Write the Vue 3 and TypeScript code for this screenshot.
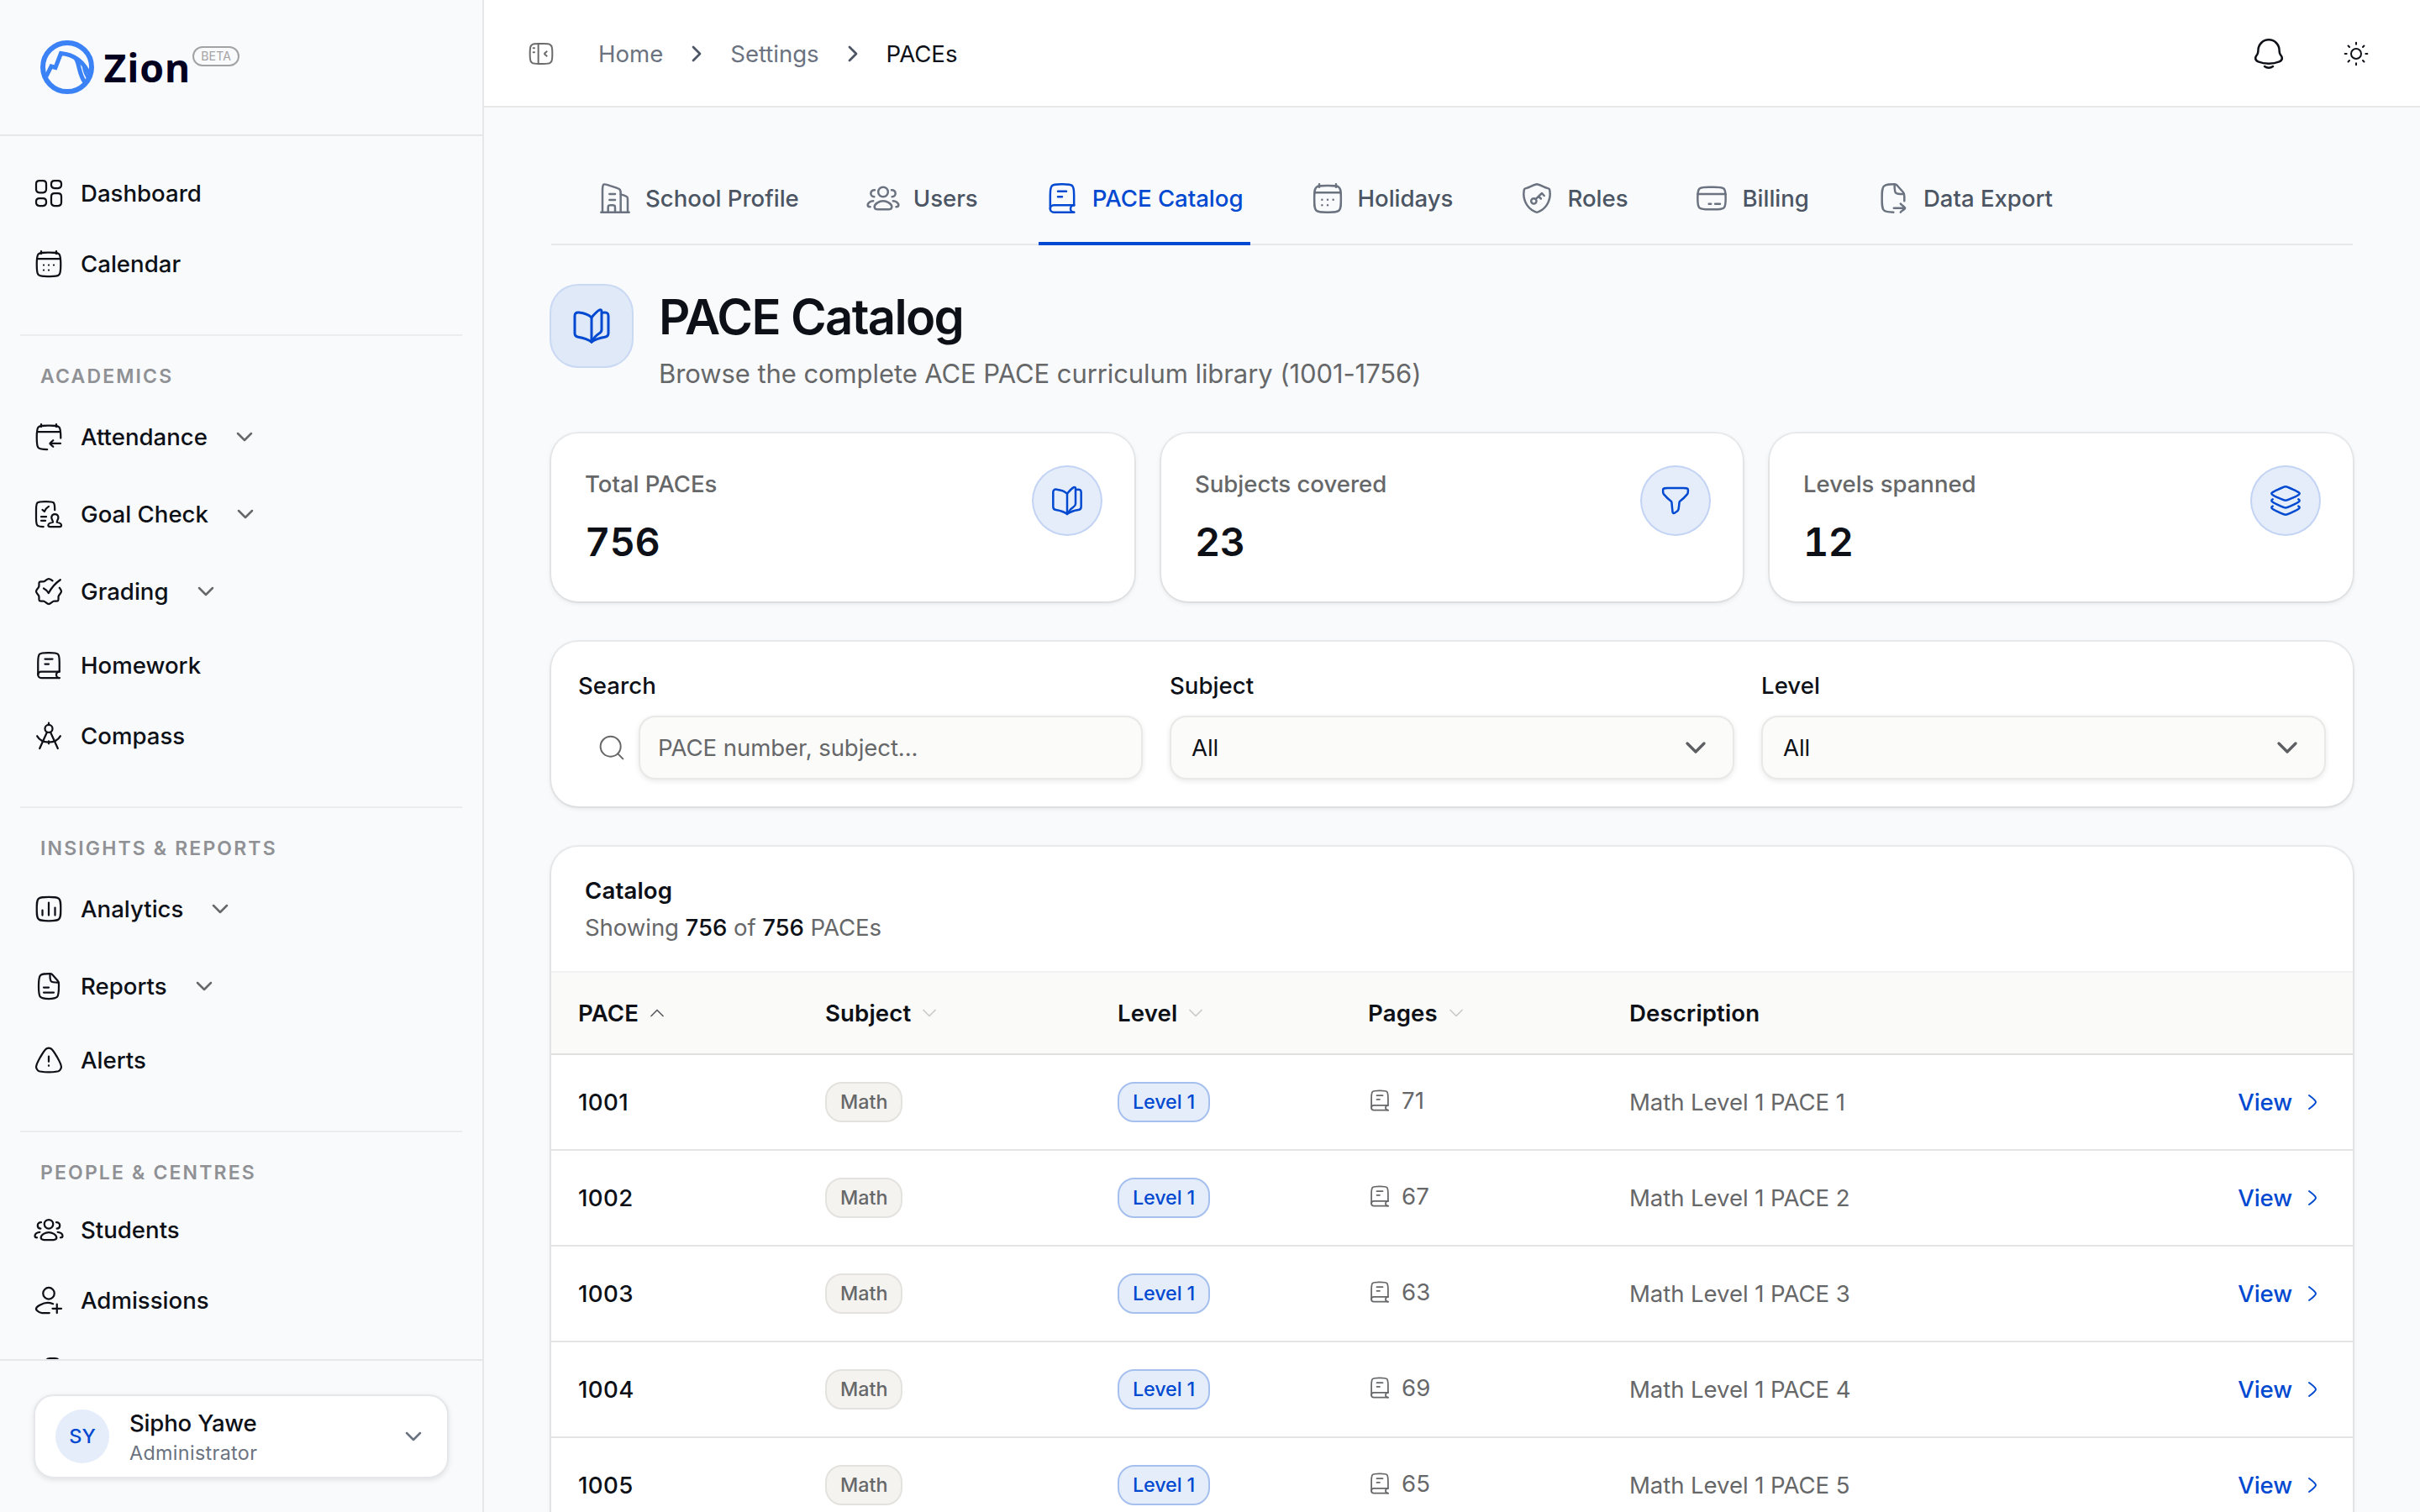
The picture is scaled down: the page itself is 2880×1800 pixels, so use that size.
<script setup lang="ts">
import { h } from 'vue'

interface IconProps {
  name: string
  size: number
  weight?: number
}

interface NavItem {
  label: string
  icon: string
  expandable?: boolean
}

interface NavSection {
  title?: string
  items: NavItem[]
}

const CARD_SQUARE =
  'M2.5 12C2.5 7.52 2.5 5.28 3.89 3.89C5.28 2.5 7.52 2.5 12 2.5C16.48 2.5 18.72 2.5 20.11 3.89C21.5 5.28 21.5 7.52 21.5 12C21.5 16.48 21.5 18.72 20.11 20.11C18.72 21.5 16.48 21.5 12 21.5C7.52 21.5 5.28 21.5 3.89 20.11C2.5 18.72 2.5 16.48 2.5 12Z'

// All icons are drawn on a 24 unit grid.
const icons: Record<string, string[]> = {
  dashboard: [
    'M2 4.6C2 2.7 2.7 2 4.6 2H7.4C9.3 2 10 2.7 10 4.6V8.9C10 10.8 9.3 11.5 7.4 11.5H4.6C2.7 11.5 2 10.8 2 8.9Z',
    'M14 4.6C14 2.7 14.7 2 16.6 2H19.4C21.3 2 22 2.7 22 4.6V5.4C22 7.3 21.3 8 19.4 8H16.6C14.7 8 14 7.3 14 5.4Z',
    'M14 14.6C14 12.7 14.7 12 16.6 12H19.4C21.3 12 22 12.7 22 14.6V19.4C22 21.3 21.3 22 19.4 22H16.6C14.7 22 14 21.3 14 19.4Z',
    'M2 18.6C2 16.7 2.7 16 4.6 16H7.4C9.3 16 10 16.7 10 18.6V19.4C10 21.3 9.3 22 7.4 22H4.6C2.7 22 2 21.3 2 19.4Z',
  ],
  calendar: [
    'M18 2V4M6 2V4',
    'M11.995 13H12.005M11.995 17H12.005M15.991 13H16M8 13H8.009M8 17H8.009',
    'M2.5 12.24C2.5 7.89 2.5 5.71 3.75 4.35C5 3 7.02 3 11.05 3H12.95C16.98 3 19 3 20.25 4.35C21.5 5.71 21.5 7.89 21.5 12.24V12.76C21.5 17.11 21.5 19.29 20.25 20.65C19 22 16.98 22 12.95 22H11.05C7.02 22 5 22 3.75 20.65C2.5 19.29 2.5 17.11 2.5 12.76Z',
    'M3 8H21',
  ],
  attendance: [
    'M18 2V4M6 2V4',
    'M21.5 13V12.24C21.5 7.89 21.5 5.71 20.25 4.35C19 3 16.98 3 12.95 3H11.05C7.02 3 5 3 3.75 4.35C2.5 5.71 2.5 7.89 2.5 12.24V12.76C2.5 17.11 2.5 19.29 3.75 20.65C4.9 21.88 6.9 22 10.8 22',
    'M3 8H21',
    'M21.3 17.3H13M13 17.3C13 16.6 14.99 15.3 15.5 14.8M13 17.3C13 18 14.99 19.3 15.5 19.8',
  ],
  goal: [
    'M16.8 8.8C16.8 5.4 16.8 3.8 15.8 2.9C14.8 2 13.2 2 10 2H8.8C5.6 2 4 2 3 3C2 4 2 5.6 2 8.8V15.2C2 18.4 2 20 3 21C3.9 21.9 5.2 22 7.8 22',
    'M7 8.6L8.6 10C9.2 8.3 10.3 6.9 12 5.9',
    'M6 14.1H10M6 17.2H9.4',
    'M15.3 18.5C15.6 17.3 14.2 16.4 14.2 14.7C14.2 13.1 15.4 12 16.9 12C18.4 12 19.6 13.1 19.6 14.7C19.6 16.4 18.2 17.3 18.5 18.5C20.4 18.8 22 19.2 22 20.8C22 21.7 21.7 22 20.8 22H13C12 22 11.6 21.7 11.6 20.8C11.6 19.2 13.4 18.8 15.3 18.5Z',
  ],
  grading: [
    'M15 3.6C14.2 2.8 13.2 2 12 2C10.6 2 9.6 3.7 8.2 4.2C7 4.6 5.3 3.9 4.6 4.6C3.9 5.3 4.6 7 4.2 8.2C3.7 9.6 2 10.6 2 12C2 13.4 3.7 14.4 4.2 15.8C4.6 17 3.9 18.7 4.6 19.4C5.3 20.1 7 19.4 8.2 19.8C9.6 20.3 10.6 22 12 22C13.4 22 14.4 20.3 15.8 19.8C17 19.4 18.7 20.1 19.4 19.4C20.1 18.7 19.4 17 19.8 15.8C20.3 14.4 22 13.4 22 12C22 10.9 21.2 10.1 20.5 9.2',
    'M8 9.6C9.6 10.4 11 11.8 11.9 13.4C14.2 8.9 17.4 5.4 21.2 2.8',
  ],
  book: [
    'M20.5 16.93V10C20.5 6.23 20.5 4.34 19.33 3.17C18.16 2 16.27 2 12.5 2H11.5C7.73 2 5.84 2 4.67 3.17C3.5 4.34 3.5 6.23 3.5 10V19.5',
    'M20.5 17H6C4.62 17 3.5 18.12 3.5 19.5C3.5 20.88 4.62 22 6 22H20.5',
    'M20.5 22C19.12 22 18 20.88 18 19.5C18 18.12 19.12 17 20.5 17',
    'M15 7H9M12 11H9',
  ],
  compass: [
    'M12 3.4V1.8',
    'M15 6.3A3 3 0 1 1 9 6.3A3 3 0 1 1 15 6.3Z',
    'M10.6 9.2L4.8 22M13.4 9.2L19.2 22',
    'M2.8 12.2C4.6 15.2 8 17 12 17C16 17 19.4 15.2 21.2 12.2M12 16.2V18.2',
  ],
  analytics: [CARD_SQUARE, 'M7 17V13M12 17V7M17 17V11'],
  report: [
    'M4 12C4 7.29 4 4.93 5.32 3.46C6.64 2 8.75 2 13 2C13.8 2 14.1 2.1 14.7 2.7L19 7.5C20 8.6 20 9 20 10.5V12C20 16.71 20 19.07 18.68 20.54C17.36 22 15.2 22 12 22C8.8 22 6.64 22 5.32 20.54C4 19.07 4 16.71 4 12Z',
    'M13 2.2V3C13 5.83 13 7.24 13.88 8.12C14.76 9 16.2 9 19 9H19.8',
    'M8 13H12M8 17H16',
  ],
  alert: [
    'M5.32 9.68C7.74 5.41 8.94 3.28 10.6 2.73C11.51 2.42 12.49 2.42 13.4 2.73C15.06 3.28 16.26 5.41 18.68 9.68C21.09 13.95 22.3 16.09 21.94 17.83C21.74 18.79 21.25 19.65 20.54 20.31C19.24 21.5 16.83 21.5 12 21.5C7.17 21.5 4.76 21.5 3.46 20.31C2.75 19.65 2.26 18.79 2.06 17.83C1.7 16.09 2.91 13.95 5.32 9.68Z',
    'M12 9V13.2M12 16.3V16.5',
  ],
  users: [
    'M15.5 7.5A3.5 3.5 0 1 1 8.5 7.5A3.5 3.5 0 1 1 15.5 7.5Z',
    'M12 14C9.4 14 5.8 15.9 5.8 18.2C5.8 19.5 7 20 8.3 20H15.7C17 20 18.2 19.5 18.2 18.2C18.2 15.9 14.6 14 12 14Z',
    'M6 6.1C4.4 6 3.2 7 3.2 8.6C3.2 10 4.2 11 5.6 11M18 6.1C19.6 6 20.8 7 20.8 8.6C20.8 10 19.8 11 18.4 11',
    'M4.9 13.9C2.9 13.9 1 15.3 1 16.8C1 17.7 1.7 18.2 2.7 18.2M19.1 13.9C21.1 13.9 23 15.3 23 16.8C23 17.7 22.3 18.2 21.3 18.2',
  ],
  userAdd: [
    'M16.5 6.5A4.5 4.5 0 1 1 7.5 6.5A4.5 4.5 0 1 1 16.5 6.5Z',
    'M12.5 22H6.59C5.04 22 3.81 21.25 2.7 20.19C.44 18.03 4.15 16.3 5.57 15.46C8.6 13.65 12.3 13.52 15.4 14.8',
    'M18.5 15V22M15 18.5H22',
  ],
  building: [
    'M2 22H22',
    'M3 22V6.72C3 4.06 3 2.73 3.85 2.2C4.7 1.67 5.95 2.15 8.45 3.1L13 4.6C14.6 5.2 15.3 5.5 15.6 6.1C16 6.7 16 7.5 16 9V22',
    'M16 9.2L18.5 10C19.8 10.5 20.4 10.7 20.7 11.2C21 11.6 21 12.2 21 13.4V22',
    'M8 9H12M8 13.2H12',
    'M12 22V19C12 18.06 12 17.59 11.71 17.29C11.41 17 10.94 17 10 17H9C8.06 17 7.59 17 7.29 17.29C7 17.59 7 18.06 7 19V22',
  ],
  shield: [
    'M12 2C9 2.6 7.04 4.02 4.73 4.75C3.8 5.05 3.33 5.2 3.14 5.41C2.95 5.63 2.89 5.93 2.78 6.55C1.9 12.5 4.4 18.6 10.2 21.4C10.9 21.8 11.4 22 12 22C12.6 22 13.1 21.8 13.8 21.4C19.6 18.6 22.1 12.5 21.22 6.55C21.11 5.93 21.05 5.63 20.86 5.41C20.67 5.2 20.2 5.05 19.27 4.75C16.96 4.02 15 2.6 12 2Z',
    'M11.7 14A1.9 1.9 0 1 1 7.9 14A1.9 1.9 0 1 1 11.7 14Z',
    'M11.1 12.7L15.6 8.4L17.2 10.2M13.3 10.7L14.9 12.3',
  ],
  card: [
    'M2 12C2 8.46 2 6.69 3.05 5.49C3.22 5.3 3.4 5.12 3.6 4.96C4.87 4 6.75 4 10.5 4H13.5C17.25 4 19.13 4 20.4 4.96C20.6 5.12 20.78 5.3 20.95 5.49C22 6.69 22 8.46 22 12C22 15.54 22 17.31 20.95 18.51C20.78 18.7 20.6 18.88 20.4 19.04C19.13 20 17.25 20 13.5 20H10.5C6.75 20 4.87 20 3.6 19.04C3.4 18.88 3.22 18.7 3.05 18.51C2 17.31 2 15.54 2 12Z',
    'M2 9H22M10 16H11.5M14.5 16H18',
  ],
  fileExport: [
    'M12.2 22C8.4 21.9 6.4 21.7 5.32 20.54C4 19.07 4 16.71 4 12C4 7.29 4 4.93 5.32 3.46C6.64 2 8.75 2 13 2C13.8 2 14.1 2.1 14.7 2.7L19 7.5C20 8.6 20 9 20 10.5V14',
    'M13 2.2V3C13 5.83 13 7.24 13.88 8.12C14.76 9 16.2 9 19 9H19.8',
    'M12.5 19H20.3M17.3 16C17.8 16.8 20.5 18.2 20.5 19C20.5 19.8 17.8 21.2 17.3 22',
  ],
  panel: [
    'M2 12C2 8.31 2 6.47 2.81 5.16C3.11 4.68 3.49 4.25 3.92 3.92C5.08 3 6.72 3 10 3H14C17.28 3 18.92 3 20.08 3.92C20.51 4.25 20.89 4.68 21.19 5.16C22 6.47 22 8.31 22 12C22 15.69 22 17.53 21.19 18.84C20.89 19.32 20.51 19.75 20.08 20.08C18.92 21 17.28 21 14 21H10C6.72 21 5.08 21 3.92 20.08C3.49 19.75 3.11 19.32 2.81 18.84C2 17.53 2 15.69 2 12Z',
    'M9.5 3V21M5 7H6M5 10.7H6',
    'M17 10L15.77 11.06C15.26 11.5 15 11.72 15 12C15 12.28 15.26 12.5 15.77 12.94L17 14',
  ],
  bell: [
    'M2.53 14.77C2.32 16.16 3.27 17.13 4.43 17.61C8.89 19.46 15.11 19.46 19.57 17.61C20.73 17.13 21.68 16.16 21.47 14.77C21.34 13.91 20.69 13.2 20.21 12.5C19.59 11.58 19.53 10.57 19.53 9.5C19.53 5.36 16.16 2 12 2C7.84 2 4.48 5.36 4.48 9.5C4.47 10.57 4.41 11.58 3.79 12.5C3.31 13.2 2.66 13.91 2.53 14.77Z',
    'M9 21C9.8 21.62 10.85 22 12 22C13.15 22 14.2 21.62 15 21',
  ],
  sun: [
    'M16.5 12A4.5 4.5 0 1 1 7.5 12A4.5 4.5 0 1 1 16.5 12Z',
    'M12 2V3.5M12 20.5V22M19.07 19.07L18.01 18.01M5.99 5.99L4.93 4.93M22 12H20.5M3.5 12H2M19.07 4.93L18.01 5.99M5.99 18.01L4.93 19.07',
  ],
  openBook: [
    'M12 21.5V7C10.5 5.5 8 4.4 4.5 4C2.7 3.8 2 4.6 2 6V16.3C2 17.9 2.6 18.4 4 18.6C7.5 19.2 10 20 12 21.5Z',
    'M12 7C13.3 5.5 14.7 3.6 16.7 2.5C17.6 2.1 18 2.6 18 3.5V14.3C18 15.5 17.5 15.9 16.5 16.5C14.7 17.6 13.2 19.3 12 21.5',
    'M18.2 4.2C21 3.6 22 4.3 22 6V16.3C22 17.9 21.4 18.4 20 18.6C16.5 19.2 14 20 12 21.5',
  ],
  filter: [
    'M8.86 12.51C6.37 10.65 4.6 8.6 3.63 7.45C3.33 7.09 3.23 6.83 3.17 6.37C2.97 4.8 2.87 4.01 3.33 3.51C3.79 3 4.6 3 6.23 3H17.77C19.4 3 20.21 3 20.67 3.51C21.13 4.01 21.03 4.8 20.83 6.37C20.77 6.83 20.67 7.09 20.37 7.45C19.4 8.6 17.63 10.65 15.13 12.51C14.91 12.68 14.76 12.96 14.73 13.26C14.48 15.99 14.26 17.49 14.11 18.24C13.89 19.47 12.15 20.2 11.23 20.86C10.67 21.25 10 20.78 9.93 20.18C9.8 19.03 9.54 16.69 9.26 13.26C9.23 12.95 9.08 12.68 8.86 12.51Z',
  ],
  layers: [
    'M8.64 3.15C10.27 2.38 11.09 2 12 2C12.91 2 13.73 2.38 15.36 3.15L18.55 4.64C20.85 5.72 22 6.06 22 6.93C22 7.79 20.85 8.33 18.55 9.41L15.36 10.7C13.73 11.47 12.91 11.85 12 11.85C11.09 11.85 10.27 11.47 8.64 10.7L5.45 9.41C3.15 8.33 2 7.79 2 6.93C2 6.06 3.15 5.72 5.45 4.64Z',
    'M21.2 11C21.7 11.3 22 11.6 22 12C22 12.86 20.85 13.4 18.55 14.48L15.36 15.97C13.73 16.73 12.91 17.1 12 17.1C11.09 17.1 10.27 16.73 8.64 15.97L5.45 14.48C3.15 13.4 2 12.86 2 12C2 11.6 2.3 11.3 2.8 11',
    'M21.2 16C21.7 16.3 22 16.6 22 17C22 17.86 20.85 18.4 18.55 19.48L15.36 20.97C13.73 21.73 12.91 22.1 12 22.1C11.09 22.1 10.27 21.73 8.64 20.97L5.45 19.48C3.15 18.4 2 17.86 2 17C2 16.6 2.3 16.3 2.8 16',
  ],
  search: ['M17.5 17.5L22 22', 'M20 11A9 9 0 1 1 2 11A9 9 0 1 1 20 11Z'],
  chevronDown: ['M18 9L12 15L6 9'],
  chevronUp: ['M18 15L12 9L6 15'],
  chevronRight: ['M9 6L15 12L9 18'],
  arrowRight: ['M9 6C9 6 15 10.4 15 12C15 13.6 9 18 9 18'],
  centre: ['M10 8V5C10 2.8 11 2 13 2H17C19 2 20 2.8 20 5V8', 'M2 22H22'],
}

const Icon = (props: IconProps) =>
  h(
    'svg',
    {
      width: props.size,
      height: props.size,
      viewBox: '0 0 24 24',
      fill: 'none',
      stroke: 'currentColor',
      'stroke-width': props.weight ?? 1.5,
      'stroke-linecap': 'round',
      'stroke-linejoin': 'round',
    },
    icons[props.name].map((d) => h('path', { d })),
  )

const sections: NavSection[] = [
  {
    items: [
      { label: 'Dashboard', icon: 'dashboard' },
      { label: 'Calendar', icon: 'calendar' },
    ],
  },
  {
    title: 'Academics',
    items: [
      { label: 'Attendance', icon: 'attendance', expandable: true },
      { label: 'Goal Check', icon: 'goal', expandable: true },
      { label: 'Grading', icon: 'grading', expandable: true },
      { label: 'Homework', icon: 'book' },
      { label: 'Compass', icon: 'compass' },
    ],
  },
  {
    title: 'Insights & Reports',
    items: [
      { label: 'Analytics', icon: 'analytics', expandable: true },
      { label: 'Reports', icon: 'report', expandable: true },
      { label: 'Alerts', icon: 'alert' },
    ],
  },
  {
    title: 'People & Centres',
    items: [
      { label: 'Students', icon: 'users' },
      { label: 'Admissions', icon: 'userAdd' },
      { label: '', icon: 'centre' },
    ],
  },
]

const tabs = [
  { label: 'School Profile', icon: 'building' },
  { label: 'Users', icon: 'users' },
  { label: 'PACE Catalog', icon: 'book', active: true },
  { label: 'Holidays', icon: 'calendar' },
  { label: 'Roles', icon: 'shield' },
  { label: 'Billing', icon: 'card' },
  { label: 'Data Export', icon: 'fileExport' },
]

const stats = [
  { label: 'Total PACEs', value: '756', icon: 'openBook' },
  { label: 'Subjects covered', value: '23', icon: 'filter' },
  { label: 'Levels spanned', value: '12', icon: 'layers' },
]

const columns = [
  { label: 'PACE', sort: 'chevronUp', sorted: true },
  { label: 'Subject', sort: 'chevronDown' },
  { label: 'Level', sort: 'chevronDown' },
  { label: 'Pages', sort: 'chevronDown' },
  { label: 'Description' },
]

const rows = [71, 67, 63, 69, 65].map((pages, i) => ({
  number: 1001 + i,
  pages,
  description: `Math Level 1 PACE ${i + 1}`,
}))
</script>

<template>
  <div class="app">
    <aside class="sidebar">
      <div class="brand">
        <svg class="brand-mark" width="64" height="64" viewBox="0 0 64 64" fill="none">
          <circle cx="32" cy="32" r="29" />
          <path d="M7 43L13 31L18 32.5L24.5 15.5C40 17 52 26 58.5 41" />
          <path d="M42 21C47 29 45.5 40 53 50" />
          <path d="M51 30C52 36 53 40 56 44" class="thin" />
        </svg>
        <span class="brand-name">Zion</span>
        <span class="brand-tag">BETA</span>
      </div>

      <nav class="nav">
        <section v-for="(section, i) in sections" :key="i" class="nav-section">
          <h2 v-if="section.title" class="nav-title">{{ section.title }}</h2>
          <a
            v-for="item in section.items"
            :key="item.icon"
            class="nav-item"
            :class="{ expandable: item.expandable }"
          >
            <Icon :name="item.icon" :size="36" />
            <span>{{ item.label }}</span>
            <Icon v-if="item.expandable" class="nav-caret" name="chevronDown" :size="32" :weight="1.9" />
          </a>
        </section>
      </nav>

      <div class="account">
        <div class="account-card">
          <span class="avatar">SY</span>
          <div class="account-text">
            <span class="account-name">Sipho Yawe</span>
            <span class="account-role">Administrator</span>
          </div>
          <Icon class="account-caret" name="chevronDown" :size="32" :weight="1.9" />
        </div>
      </div>
    </aside>

    <div class="page">
      <header class="topbar">
        <Icon class="toggle" name="panel" :size="32" />
        <div class="crumbs">
          <span>Home</span>
          <Icon name="chevronRight" :size="32" :weight="2" />
          <span>Settings</span>
          <Icon name="chevronRight" :size="32" :weight="2" />
          <span class="current">PACEs</span>
        </div>
        <div class="actions">
          <Icon name="bell" :size="40" />
          <Icon name="sun" :size="32" />
        </div>
      </header>

      <main class="content">
        <nav class="tabs">
          <a v-for="tab in tabs" :key="tab.label" class="tab" :class="{ active: tab.active }">
            <Icon :name="tab.icon" :size="40" />
            <span>{{ tab.label }}</span>
          </a>
        </nav>

        <header class="heading">
          <div class="heading-icon"><Icon name="openBook" :size="48" /></div>
          <div>
            <h1>PACE Catalog</h1>
            <p>Browse the complete ACE PACE curriculum library (1001-1756)</p>
          </div>
        </header>

        <section class="stats">
          <div v-for="stat in stats" :key="stat.label" class="card stat">
            <div>
              <div class="stat-label">{{ stat.label }}</div>
              <div class="stat-value">{{ stat.value }}</div>
            </div>
            <div class="stat-icon"><Icon :name="stat.icon" :size="40" /></div>
          </div>
        </section>

        <section class="card filters">
          <div class="field">
            <label>Search</label>
            <div class="search">
              <Icon name="search" :size="32" />
              <div class="control placeholder">PACE number, subject...</div>
            </div>
          </div>
          <div v-for="name in ['Subject', 'Level']" :key="name" class="field">
            <label>{{ name }}</label>
            <div class="control select">
              <span>All</span>
              <Icon name="chevronDown" :size="40" :weight="2" />
            </div>
          </div>
        </section>

        <section class="card catalog">
          <div class="catalog-head">
            <h3>Catalog</h3>
            <p>Showing <b>756</b> of <b>756</b> PACEs</p>
          </div>
          <div class="row head">
            <div v-for="col in columns" :key="col.label" class="th">
              <span>{{ col.label }}</span>
              <Icon
                v-if="col.sort"
                class="sort"
                :class="{ sorted: col.sorted }"
                :name="col.sort"
                :size="28"
              />
            </div>
          </div>
          <div v-for="row in rows" :key="row.number" class="row">
            <div class="number">{{ row.number }}</div>
            <div><span class="pill">Math</span></div>
            <div><span class="pill level">Level 1</span></div>
            <div class="pages">
              <Icon name="book" :size="28" />
              <span>{{ row.pages }}</span>
            </div>
            <div class="description">{{ row.description }}</div>
            <a class="view">View<Icon name="arrowRight" :size="32" /></a>
          </div>
        </section>
      </main>
    </div>
  </div>
</template>

<style>
body {
  overflow: hidden;
}
</style>

<style scoped>
* {
  box-sizing: border-box;
}

h1,
h2,
h3,
p {
  margin: 0;
}

svg {
  display: block;
  flex: none;
}

.app {
  display: flex;
  width: 2880px;
  height: 1800px;
  overflow: hidden;
  background: #f9fafc;
  color: #0d1117;
  font-family: Inter, 'Liberation Sans', sans-serif;
  font-size: 27.6px;
  letter-spacing: -0.09px;
  line-height: 40px;
}

/* Sidebar */
.sidebar {
  display: flex;
  flex: none;
  flex-direction: column;
  width: 576px;
  border-right: 2px solid #e5e7eb;
}

.brand {
  display: flex;
  flex: none;
  align-items: flex-start;
  height: 162px;
  padding: 48px 48px 0;
  border-bottom: 2px solid #e6e7e9;
}

.brand-mark {
  stroke: #3b82f6;
  stroke-width: 6;
}

.brand-mark path {
  stroke-width: 5;
}

.brand-mark .thin {
  stroke-width: 3;
}

.brand-name {
  margin-left: 11.5px;
  color: #03001f;
  font-family: 'Open Sans', 'Noto Sans', sans-serif;
  font-size: 46.5px;
  font-weight: 700;
  letter-spacing: 0.8px;
  line-height: 64px;
}

.brand-tag {
  height: 24px;
  margin: 7px 0 0 2px;
  padding: 0 8px;
  border: 2px solid #a3a3a3;
  border-radius: 12px;
  color: #a3a3a3;
  font-size: 14px;
  letter-spacing: 0.2px;
  line-height: 20px;
}

.nav {
  flex: 1;
  min-height: 0;
  padding: 28px 24px 0;
  overflow: hidden;
}

.nav-section {
  display: flex;
  flex-direction: column;
  gap: 4px;
}

.nav-section + .nav-section {
  margin-top: 44px;
  border-top: 2px solid #ebecee;
}

.nav-title {
  height: 72px;
  padding: 32px 24px 0;
  color: #8f9195;
  font-size: 23px;
  font-weight: 600;
  letter-spacing: 2.15px;
  line-height: 32px;
  text-transform: uppercase;
}

.nav-item {
  display: flex;
  align-items: center;
  gap: 20px;
  height: 80px;
  padding: 0 16px;
  font-weight: 500;
  letter-spacing: 0;
}

.nav-item.expandable {
  height: 88px;
}

.nav-caret {
  margin-left: 8px;
  color: #66686c;
}

.account {
  flex: none;
  height: 182px;
  padding: 40px 40px 0;
  border-top: 2px solid #e5e7eb;
}

.account-card {
  display: flex;
  align-items: center;
  height: 100px;
  padding: 0 24px;
  border: 2px solid #e5e7eb;
  border-radius: 24px;
  background: #fff;
  box-shadow: 0 2px 6px rgba(0, 0, 0, 0.1);
}

.avatar {
  width: 64px;
  height: 64px;
  border-radius: 50%;
  background: #e5edfa;
  color: #0049d0;
  font-size: 23.5px;
  font-weight: 500;
  line-height: 64px;
  text-align: center;
}

.account-text {
  display: flex;
  flex: 1;
  flex-direction: column;
  margin-left: 24px;
}

.account-name {
  font-weight: 500;
  letter-spacing: -0.22px;
  line-height: 40px;
}

.account-role {
  color: #6b7280;
  font-size: 23.3px;
  letter-spacing: 0.35px;
  line-height: 32px;
}

.account-caret {
  color: #6b7280;
}

/* Top bar */
.page {
  flex: 1;
  min-width: 0;
}

.topbar {
  display: flex;
  align-items: center;
  height: 128px;
  padding: 2px 60px 0 52px;
  border-bottom: 2px solid #e6e7e9;
  background: #fff;
}

.toggle {
  color: #6b6b6b;
}

.crumbs {
  display: flex;
  flex: 1;
  align-items: center;
  gap: 24px;
  margin-left: 52px;
  color: #6b7280;
  letter-spacing: -0.03px;
}

.crumbs svg {
  color: #4b5563;
}

.current {
  color: #0d1117;
}

.actions {
  display: flex;
  align-items: center;
  gap: 68px;
}

/* Tabs */
.content {
  padding: 56px 80px 0;
}

.tabs {
  display: flex;
  gap: 64px;
  height: 108px;
  padding-left: 48px;
  border-bottom: 2px solid #e6e7e9;
}

.tab {
  display: flex;
  align-items: center;
  gap: 16px;
  height: 108px;
  padding: 0 8px;
  border-bottom: 4px solid transparent;
  color: #4b5563;
  font-weight: 500;
  letter-spacing: -0.03px;
}

.tab svg {
  color: #6b7280;
}

.tab.active {
  border-color: #0049d0;
  color: #0049d0;
}

.tab.active svg {
  color: #0049d0;
}

/* Page heading */
.heading {
  display: flex;
  gap: 32px;
  margin-top: 48px;
}

.heading-icon {
  display: flex;
  align-items: center;
  justify-content: center;
  width: 96px;
  height: 96px;
  border-radius: 32px;
  background: #e0e9f7;
  box-shadow: 0 0 0 2px #c9d8f3;
  color: #0049d0;
}

.heading h1 {
  font-size: 58px;
  font-weight: 600;
  letter-spacing: -1.65px;
  line-height: 74px;
}

.heading p {
  margin: 7px 0 -1px;
  color: #666769;
  font-size: 31px;
  letter-spacing: -0.08px;
  line-height: 48px;
}

/* Cards */
.card {
  border-radius: 32px;
  background: #fff;
  box-shadow:
    0 0 0 2px rgba(0, 0, 0, 0.05),
    0 2px 6px rgba(0, 0, 0, 0.1);
}

.stats {
  display: grid;
  grid-template-columns: 694px 692px 694px;
  gap: 32px;
  margin-top: 48px;
}

.stat {
  display: flex;
  justify-content: space-between;
  height: 200px;
  padding: 40px;
}

.stat-label {
  color: #666769;
  font-weight: 500;
  letter-spacing: -0.05px;
}

.stat-value {
  margin-top: 17px;
  font-size: 46.8px;
  font-variant-numeric: tabular-nums;
  font-weight: 600;
  letter-spacing: -0.5px;
  line-height: 64px;
}

.stat-icon {
  display: flex;
  align-items: center;
  justify-content: center;
  width: 80px;
  height: 80px;
  border-radius: 50%;
  background: #e5edfa;
  box-shadow: 0 0 0 2px #c2d3f3;
  color: #0049d0;
}

/* Filters */
.filters {
  display: grid;
  grid-template-columns: repeat(3, 1fr);
  gap: 32px;
  margin-top: 48px;
  padding: 32px;
}

.field {
  display: flex;
  flex-direction: column;
  gap: 16px;
}

.field label {
  font-weight: 500;
  letter-spacing: 0.03px;
}

.search {
  display: flex;
  align-items: center;
  gap: 16px;
  padding-left: 24px;
  color: #666769;
}

.control {
  height: 76px;
  padding: 0 21px;
  border: 2px solid #e9e9e8;
  border-radius: 20px;
  background: #fbfbfa;
  box-shadow: 0 2px 6px rgba(0, 0, 0, 0.09);
  line-height: 72px;
}

.placeholder {
  flex: 1;
}

.select {
  display: flex;
  align-items: center;
  justify-content: space-between;
  padding: 0 24px;
}

.select svg {
  color: #5c5e62;
}

/* Catalog table */
.catalog {
  height: 900px;
  margin-top: 48px;
  overflow: hidden;
}

.catalog-head {
  height: 150px;
  padding: 32px 40px 0;
  border-bottom: 2px solid #f1f1f1;
}

.catalog-head h3 {
  font-size: 27.6px;
  font-weight: 600;
  letter-spacing: 0.12px;
}

.catalog-head p {
  margin-top: 4px;
  color: #666769;
}

.catalog-head b {
  color: #0d1117;
  font-weight: 500;
}

.row {
  display: grid;
  grid-template-columns: 294px 348px 298px 311px 1fr auto;
  align-items: center;
  height: 114px;
  padding: 0 32px;
  border-bottom: 2px solid #e4e4e4;
}

.row.head {
  height: 98px;
  border-color: #e0e0e0;
  background: #fafaf9;
}

.th {
  display: flex;
  align-items: center;
  gap: 8px;
  font-weight: 600;
  letter-spacing: 0.14px;
}

.sort {
  color: #c9cacb;
}

.sort.sorted {
  color: #5c5e62;
}

.number {
  font-weight: 500;
  letter-spacing: 0.4px;
}

.pill {
  display: inline-block;
  height: 48px;
  padding: 0 16px;
  border: 2px solid #e3e2df;
  border-radius: 20px;
  background: #f4f3f0;
  color: #666769;
  font-size: 23.3px;
  font-weight: 500;
  letter-spacing: 0;
  line-height: 44px;
  vertical-align: top;
}

.pill.level {
  border-color: #a5c0ee;
  background: #e5edfa;
  color: #0049d0;
  letter-spacing: -0.1px;
}

.pages {
  display: flex;
  align-items: center;
  gap: 12px;
  margin-top: -4px;
  color: #666769;
  letter-spacing: 0.1px;
}

.description {
  color: #666769;
}

.view {
  display: flex;
  align-items: center;
  gap: 8px;
  color: #0049d0;
  font-weight: 500;
}
</style>
